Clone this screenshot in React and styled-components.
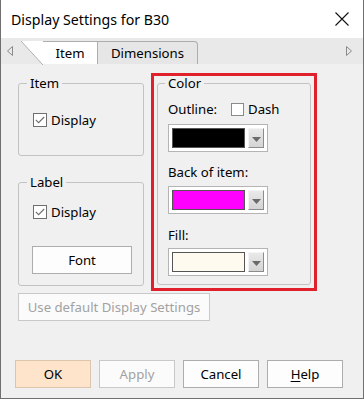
import React from 'react';
import styled, { createGlobalStyle } from 'styled-components';

const GlobalStyle = createGlobalStyle`
  html, body {
    margin: 0;
    padding: 0;
    background: #fff;
  }
  body {
    font-family: "Noto Sans", "DejaVu Sans", sans-serif;
  }
`;

const Window = styled.div`
  box-sizing: border-box;
  width: 364px;
  height: 399px;
  display: flex;
  flex-direction: column;
  border: 1px solid #707070;
  border-top: none;
  background: #f0f0f0;
  color: #000;
  font-size: 13.2px;
`;

const TitleBar = styled.div`
  height: 38px;
  flex: none;
  display: flex;
  align-items: center;
  justify-content: space-between;
  padding: 0 14px 0 10px;
  background: #fff;
  font-size: 14.2px;
`;

const TabStrip = styled.div`
  height: 26px;
  flex: none;
  display: flex;
  align-items: flex-end;
  background: #e9e9e9;
`;

const ArrowBox = styled.div`
  align-self: stretch;
  display: flex;
  align-items: center;
  width: ${({ side }) => (side === 'left' ? '13px' : '6px')};
  padding-left: ${({ side }) => (side === 'left' ? '6px' : '0')};
  padding-right: ${({ side }) => (side === 'right' ? '11px' : '0')};
  margin-left: ${({ side }) => (side === 'right' ? 'auto' : '0')};
`;

const Tab = styled.div`
  position: relative;
  box-sizing: border-box;
  height: 23px;
  display: flex;
  align-items: center;
  justify-content: center;
  border-top: 1px solid #adadad;
  border-right: 1px solid #adadad;
  ${({ active }) =>
    active
      ? `
    width: 55px;
    margin-left: 23px;
    background: #fff;
    &::before {
      content: '';
      position: absolute;
      left: -22px;
      top: -1px;
      width: 22px;
      height: 24px;
      background: linear-gradient(to top right, transparent calc(50% - 0.7px), #adadad 50%, #fff calc(50% + 0.7px));
    }
  `
      : `
    width: 100px;
    background: #e6e6e6;
    border-top-right-radius: 4px;
  `}
`;

const Panel = styled.div`
  flex: 1;
  display: flex;
  flex-direction: column;
`;

const Body = styled.div`
  padding: 9px 0 0 17px;
  display: flex;
  flex-direction: column;
`;

const TopRow = styled.div`
  display: flex;
  align-items: flex-start;
  gap: 7px;
`;

const LeftCol = styled.div`
  width: 126px;
  margin-top: 3px;
  display: flex;
  flex-direction: column;
  gap: 19px;
`;

const GroupBox = styled.fieldset`
  box-sizing: border-box;
  margin: 0;
  min-width: 0;
  padding: ${({ pad }) => pad || '0'};
  height: ${({ h }) => (h ? `${h}px` : 'auto')};
  border: 1px solid #c3c3c3;
  border-radius: 3px;
  display: flex;
  flex-direction: column;
  align-items: flex-start;
`;

const Legend = styled.legend`
  margin-left: ${({ offset }) => (offset === undefined ? 8 : offset)}px;
  padding: 0 3px;
  line-height: 14px;
`;

const CheckRow = styled.label`
  display: flex;
  align-items: center;
  gap: 4px;
  height: 18px;
  line-height: 18px;
  margin-left: ${({ indent }) => indent || 0}px;
`;

const Box = styled.span`
  box-sizing: border-box;
  width: ${({ size }) => size}px;
  height: ${({ size }) => size}px;
  border: 1px solid ${({ checked }) => (checked ? '#6f6f6f' : '#8a8a8a')};
  background: #fff;
  display: flex;
  align-items: center;
  justify-content: center;
`;

const Button = styled.button`
  box-sizing: border-box;
  width: ${({ w }) => w || 76}px;
  height: 28px;
  margin: 0;
  padding: 0;
  font-family: inherit;
  font-size: inherit;
  border: 1px solid ${({ disabled, primary }) =>
    primary ? '#dcc5ad' : disabled ? '#c9c9c9' : '#adadad'};
  background: ${({ primary, disabled }) =>
    primary ? '#fde4cb' : disabled ? '#fbfbfb' : '#fdfdfd'};
  color: ${({ disabled }) => (disabled ? '#a2a2a2' : '#000')};
  u {
    text-decoration: underline;
    text-underline-offset: 2px;
  }
`;

const FontButton = styled(Button)`
  margin: 25px 0 0 13px;
`;

const UseDefaultButton = styled(Button)`
  margin-top: 2px;
`;

const RedFrame = styled.div`
  box-sizing: border-box;
  width: 166px;
  border: 3px solid #e0202a;
  padding: 0 3px 3px 3px;
`;

const ColorGroup = styled(GroupBox)`
  width: 154px;
  padding: 10px 0 8px 10px;
`;

const OutlineRow = styled.div`
  display: flex;
  align-items: center;
  height: 18px;
`;

const FieldLabel = styled.div`
  height: 18px;
  line-height: 18px;
  width: ${({ w }) => (w ? `${w}px` : 'auto')};
  margin-top: ${({ mt }) => mt || 0}px;
`;

const Combo = styled.div`
  box-sizing: border-box;
  width: 100px;
  height: 28px;
  margin-top: ${({ mt }) => mt}px;
  padding: 3px;
  display: flex;
  gap: 3px;
  border: 1px solid #b4b4b4;
  background: #fff;
`;

const Swatch = styled.div`
  box-sizing: border-box;
  width: 74px;
  height: 20px;
  border: 1px solid #555;
  background: ${({ color }) => color};
`;

const DropButton = styled.div`
  box-sizing: border-box;
  width: 16px;
  height: 20px;
  display: flex;
  align-items: flex-end;
  justify-content: center;
  padding-bottom: 5px;
  border: 1px solid;
  border-color: #f4f4f4 #8c8c8c #8c8c8c #f4f4f4;
  background: linear-gradient(#e9e9e9, #d4d4d4);
`;

const Footer = styled.div`
  margin-top: auto;
  padding: 0 0 10px 14px;
  display: flex;
  gap: 8px;
`;

const CloseIcon = () => (
  <svg width="14" height="14" viewBox="0 0 14 14">
    <path d="M0.5 0.5 L13.5 13.5 M13.5 0.5 L0.5 13.5" stroke="#111" strokeWidth="1.1" fill="none" />
  </svg>
);

const ScrollArrow = ({ dir }) => (
  <svg width="6" height="10" viewBox="0 0 6 10">
    <path
      d={dir === 'left' ? 'M5.5 0.5 L0.5 5 L5.5 9.5 Z' : 'M0.5 0.5 L5.5 5 L0.5 9.5 Z'}
      stroke="#8a8a8a"
      fill="none"
    />
  </svg>
);

const CheckMark = () => (
  <svg width="10" height="8" viewBox="0 0 10 8">
    <path d="M0.8 3.8 L3.6 6.6 L9.2 1" stroke="#6d6d6d" strokeWidth="1.1" fill="none" />
  </svg>
);

const Check = ({ checked, size = 14, label, indent }) => (
  <CheckRow indent={indent}>
    <Box size={size} checked={checked}>
      {checked && <CheckMark />}
    </Box>
    {label}
  </CheckRow>
);

const ColorPicker = ({ color, mt }) => (
  <Combo mt={mt}>
    <Swatch color={color} />
    <DropButton>
      <svg width="9" height="5" viewBox="0 0 9 5">
        <path d="M0 0 H9 L4.5 5 Z" fill="#6a6a6a" />
      </svg>
    </DropButton>
  </Combo>
);

const App = () => (
  <>
    <GlobalStyle />
    <Window>
      <TitleBar>
        <span>Display Settings for B30</span>
        <CloseIcon />
      </TitleBar>
      <TabStrip>
        <ArrowBox side="left">
          <ScrollArrow dir="left" />
        </ArrowBox>
        <Tab active>Item</Tab>
        <Tab>Dimensions</Tab>
        <ArrowBox side="right">
          <ScrollArrow dir="right" />
        </ArrowBox>
      </TabStrip>
      <Panel>
        <Body>
          <TopRow>
            <LeftCol>
              <GroupBox h={80} pad="21px 0 0 0">
                <Legend>Item</Legend>
                <Check checked label="Display" indent={14} />
              </GroupBox>
              <GroupBox h={111} pad="14px 0 0 0">
                <Legend>Label</Legend>
                <Check checked label="Display" indent={14} />
                <FontButton w={100}>Font</FontButton>
              </GroupBox>
            </LeftCol>
            <RedFrame>
              <ColorGroup>
                <Legend offset={-3}>Color</Legend>
                <OutlineRow>
                  <FieldLabel w={63}>Outline:</FieldLabel>
                  <Check size={13} label="Dash" />
                </OutlineRow>
                <ColorPicker color="#000000" mt={6} />
                <FieldLabel mt={11}>Back of item:</FieldLabel>
                <ColorPicker color="#ff00ff" mt={5} />
                <FieldLabel mt={12}>Fill:</FieldLabel>
                <ColorPicker color="#fffaf0" mt={4} />
              </ColorGroup>
            </RedFrame>
          </TopRow>
          <UseDefaultButton w={192} disabled>
            Use default Display Settings
          </UseDefaultButton>
        </Body>
        <Footer>
          <Button primary>OK</Button>
          <Button disabled>Apply</Button>
          <Button>Cancel</Button>
          <Button>
            <u>H</u>elp
          </Button>
        </Footer>
      </Panel>
    </Window>
  </>
);

export default App;
